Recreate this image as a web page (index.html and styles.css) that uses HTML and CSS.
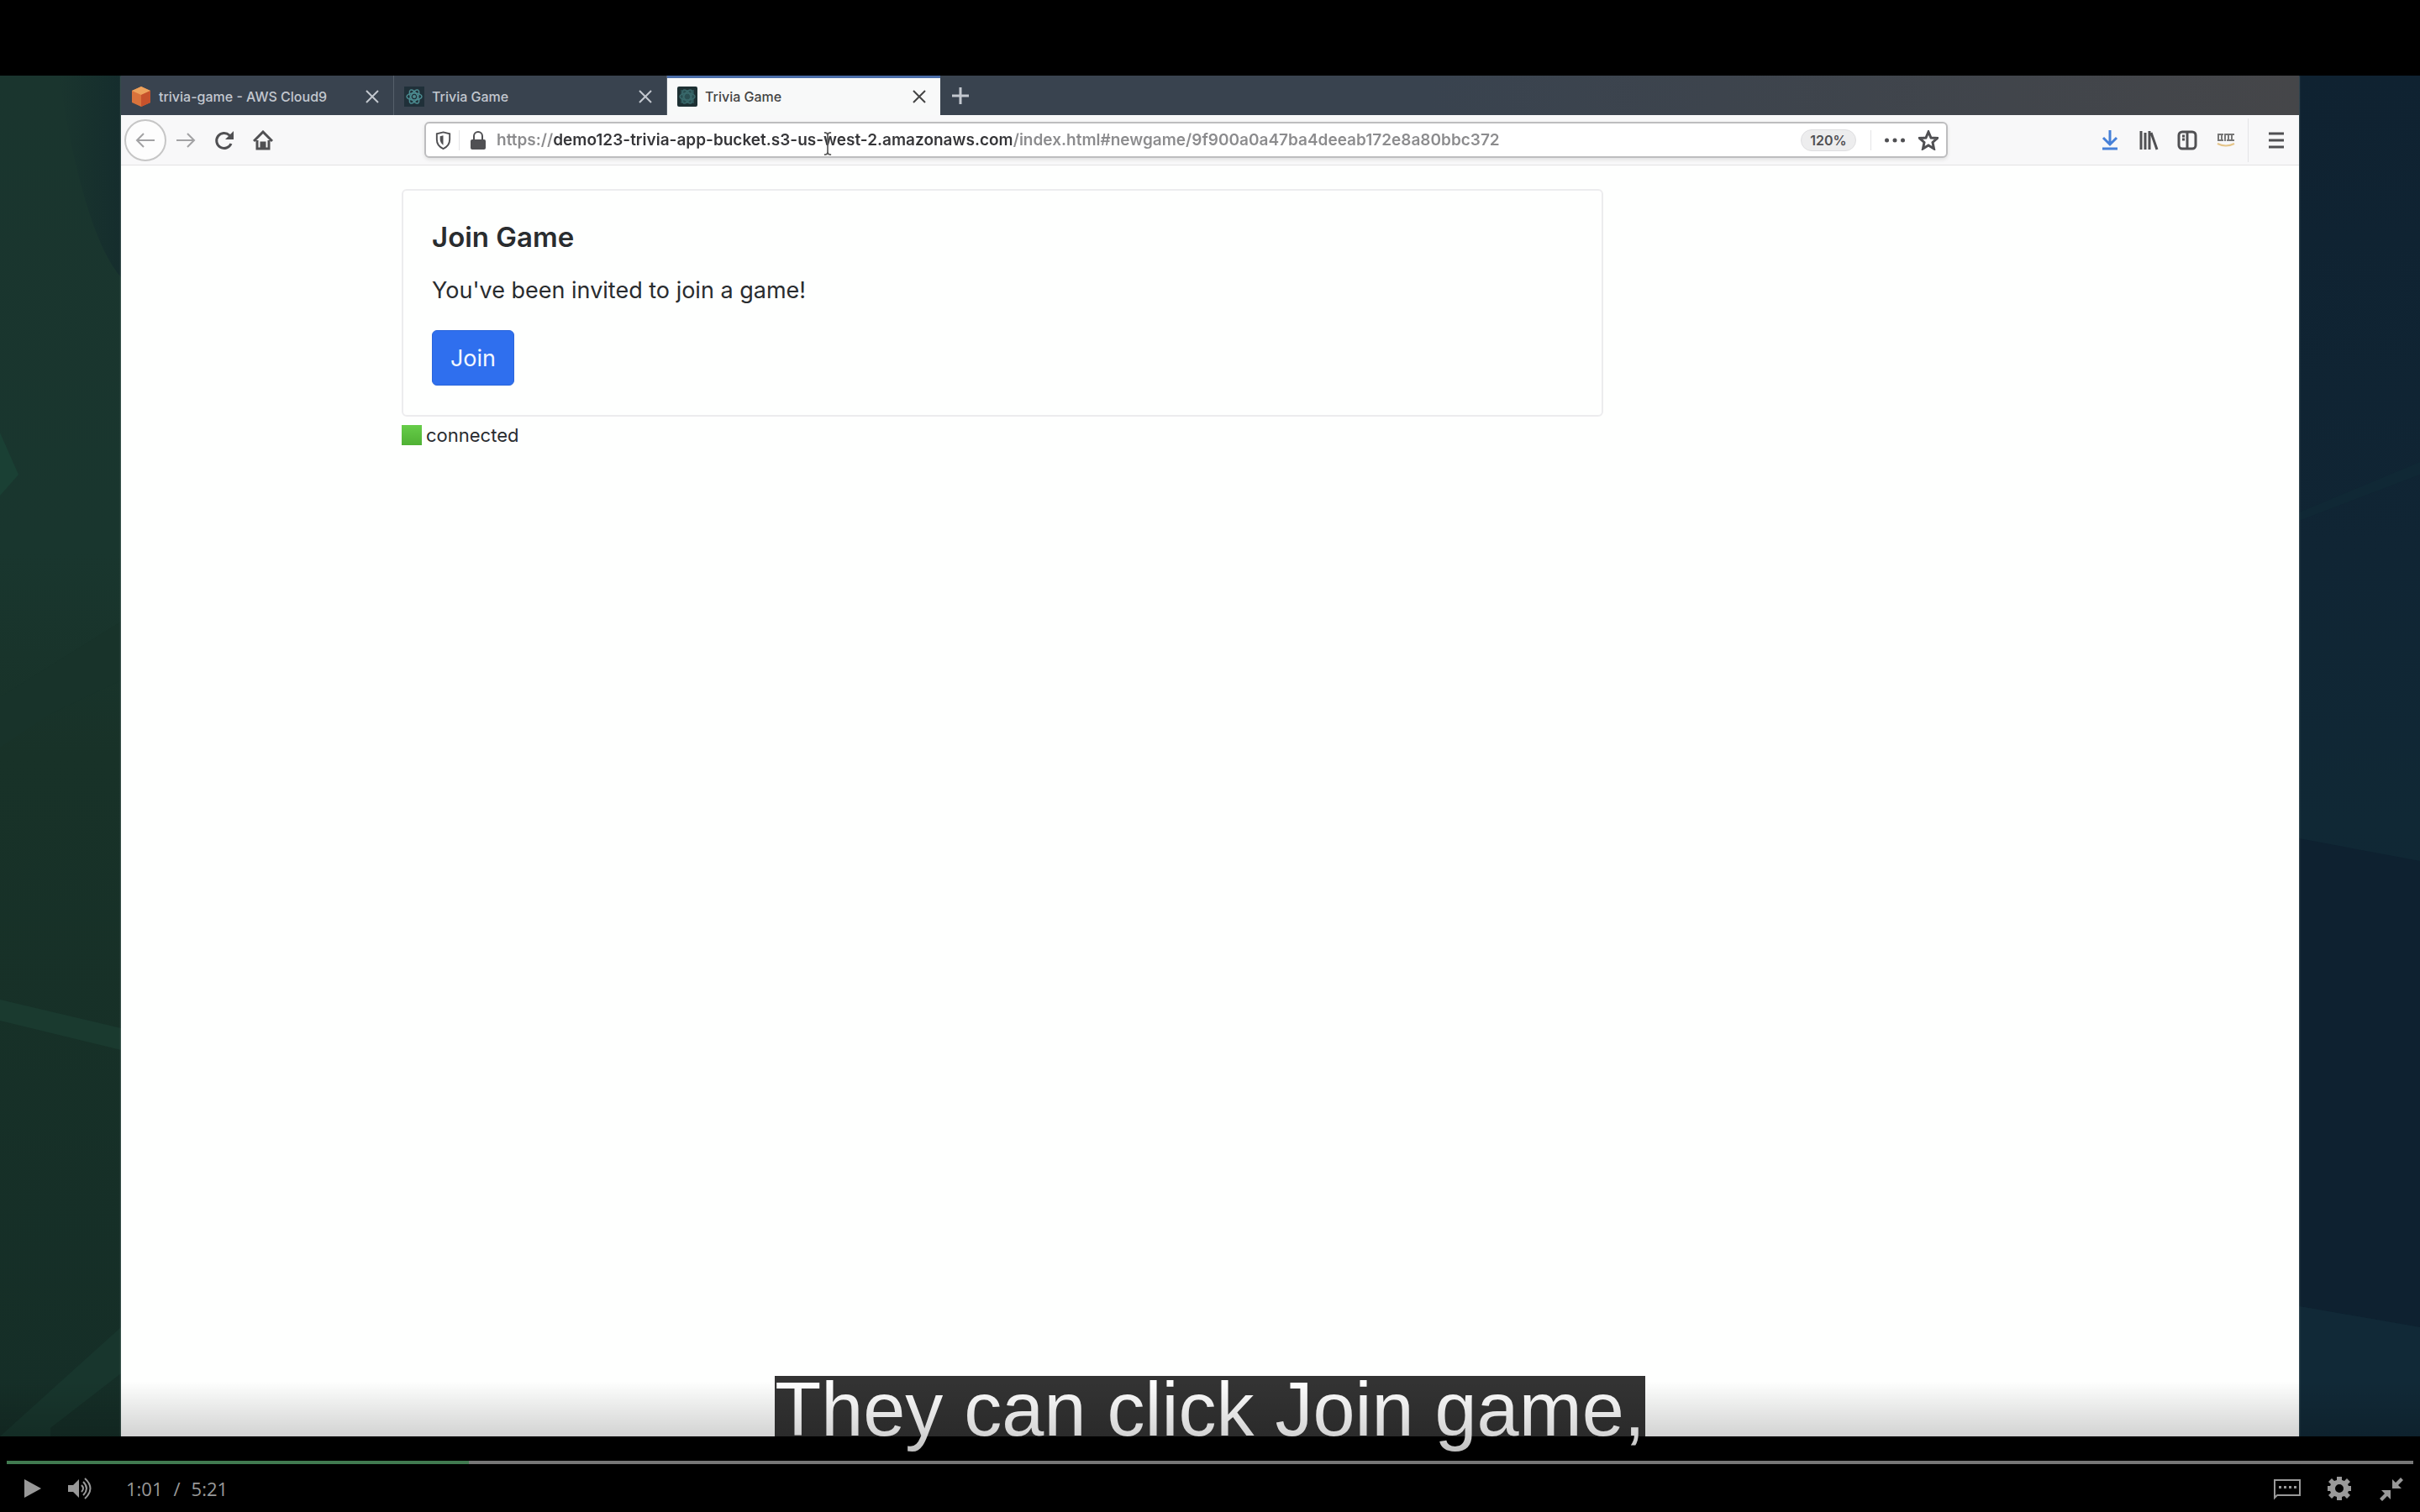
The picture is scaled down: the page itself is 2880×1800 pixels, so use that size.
FILE: index.html
```html
<!DOCTYPE html>
<html lang="en">
<head>
<meta charset="utf-8">
<title>Trivia Game video</title>
<link rel="stylesheet" href="styles.css">
</head>
<body>
<main class="player">
  <section class="video">
    <svg class="backdrop" viewBox="0 0 2880 1620" preserveAspectRatio="none" aria-hidden="true">
      <defs>
        <linearGradient id="green" x1="0" y1="0" x2="0" y2="1">
          <stop offset="0" stop-color="#1a352e"/><stop offset=".35" stop-color="#19362e"/>
          <stop offset=".5" stop-color="#183228"/><stop offset="1" stop-color="#152e27"/>
        </linearGradient>
        <linearGradient id="navy" x1="0" y1="0" x2="0" y2="1">
          <stop offset="0" stop-color="#0f2231"/><stop offset=".35" stop-color="#102534"/>
          <stop offset=".55" stop-color="#102835"/><stop offset="1" stop-color="#102533"/>
        </linearGradient>
        <linearGradient id="patch" x1="0" y1="0" x2="1" y2="0">
          <stop offset="0" stop-color="#152d2d" stop-opacity="0"/><stop offset="1" stop-color="#152d2d"/>
        </linearGradient>
      </defs>
      <rect width="1440" height="1620" fill="url(#green)"/>
      <rect x="1440" width="1440" height="1620" fill="url(#navy)"/>
      <path d="M70 0H144V240Q100 190 70 0Z" fill="url(#patch)"/>
      <path d="M0 425 22 475 0 500Z" fill="#1a4034"/>
      <path d="M0 740 144 650V720L60 760 0 800Z" fill="#18332a"/>
      <path d="M0 1100 144 1134V1160L0 1125Z" fill="#1a3a2f"/>
      <path d="M144 1490V1545L60 1610V1620H0Z" fill="#18362d"/>
      <path d="M2736 520 2880 460V475L2736 530Z" fill="#102835"/>
      <path d="M2736 908 2880 935V1490L2736 1465Z" fill="#0e2130"/>
      <path d="M2736 1465 2880 1490V1620H2736Z" fill="#112937"/>
    </svg>

    <div class="browser">
      <nav class="tabs" aria-label="Browser tabs">
        <div class="tab">
          <svg class="favicon" viewBox="0 0 24 24" aria-hidden="true"><path d="M12 0 23 5V19L12 24 1 19V5Z" fill="#d9733c"/><path d="M12 0 23 5 12 10 1 5Z" fill="#eda25c"/><path d="M12 10 23 5V19L12 24Z" fill="#c7522c"/></svg>
          <span class="tab-title">trivia-game - AWS Cloud9</span>
          <button class="close" aria-label="Close tab"><svg viewBox="0 0 16 16"><path d="M1 1 15 15M15 1 1 15"/></svg></button>
        </div>
        <div class="tab">
          <svg class="favicon" viewBox="0 0 24 24" aria-hidden="true"><rect width="24" height="24" fill="#203039"/><g fill="none" stroke="#4c8c91" stroke-width="1.5"><ellipse cx="12" cy="12" rx="9" ry="4"/><ellipse cx="12" cy="12" rx="9" ry="4" transform="rotate(60 12 12)"/><ellipse cx="12" cy="12" rx="9" ry="4" transform="rotate(120 12 12)"/></g><circle cx="12" cy="12" r="2" fill="#4c8c91"/></svg>
          <span class="tab-title">Trivia Game</span>
          <button class="close" aria-label="Close tab"><svg viewBox="0 0 16 16"><path d="M1 1 15 15M15 1 1 15"/></svg></button>
        </div>
        <div class="tab tab-active">
          <svg class="favicon" viewBox="0 0 24 24" aria-hidden="true"><rect width="24" height="24" rx="2" fill="#1d3033"/><rect x="4" y="4" width="16" height="16" fill="#2a4e51"/><g fill="none" stroke="#39696b" stroke-width="1.5"><ellipse cx="12" cy="12" rx="9" ry="4"/><ellipse cx="12" cy="12" rx="9" ry="4" transform="rotate(60 12 12)"/><ellipse cx="12" cy="12" rx="9" ry="4" transform="rotate(120 12 12)"/></g></svg>
          <span class="tab-title">Trivia Game</span>
          <button class="close" aria-label="Close tab"><svg viewBox="0 0 16 16"><path d="M1 1 15 15M15 1 1 15"/></svg></button>
        </div>
        <button class="new-tab" aria-label="New tab"><svg viewBox="0 0 20 20"><path d="M10 0V20M0 10H20"/></svg></button>
      </nav>

      <div class="toolbar">
        <div class="nav-buttons">
          <button class="tool back" aria-label="Back"><svg class="icon faded" viewBox="0 0 24 24"><path d="M23 12H2M10 4 2 12 10 20"/></svg></button>
          <button class="tool" aria-label="Forward"><svg class="icon faded" viewBox="0 0 24 24"><path d="M1 12H22M14 4 22 12 14 20"/></svg></button>
          <button class="tool" aria-label="Reload"><svg class="icon bold" viewBox="0 0 24 24"><path d="M20 16A9 9 0 1 1 18 6L21 9"/><path d="M23 1V11H13Z" fill="currentColor" stroke="none"/></svg></button>
          <button class="tool" aria-label="Home"><svg class="icon bold" viewBox="0 0 24 24"><path d="M1 13 12 2 23 13M5 12V22H19V12"/><path d="M10 22V15H14V22" fill="currentColor"/></svg></button>
        </div>
        <div class="address">
          <svg class="icon shield" viewBox="0 0 24 24" aria-hidden="true"><path d="M12 2 20 4V11Q20 19 12 22.500Q4 19 4 11V4Z"/><path d="M12 6V18Q8 15 8 11V7Z" fill="currentColor" stroke="none"/></svg>
          <svg class="icon lock" viewBox="0 0 24 24" aria-hidden="true"><rect x="3" y="11" width="18" height="12" rx="2" fill="currentColor" stroke="none"/><path d="M7 12V7A5 5 0 0 1 17 7V12"/></svg>
          <input class="url" type="text" aria-label="Address" value="https://demo123-trivia-app-bucket.s3-us-west-2.amazonaws.com/index.html#newgame/9f900a0a47ba4deeab172e8a80bbc372">
          <button class="zoom">120%</button>
          <div class="page-actions">
            <button class="tool" aria-label="Page actions"><svg class="icon" viewBox="0 0 24 24"><g fill="currentColor" stroke="none"><circle cx="2.500" cy="12" r="2.500"/><circle cx="12" cy="12" r="2.500"/><circle cx="21.500" cy="12" r="2.500"/></g></svg></button>
            <button class="tool" aria-label="Bookmark"><svg class="icon bold" viewBox="0 0 24 24"><path d="M12 2 15 9 22.500 9.500 17 14.500 18.500 22 12 18 5.500 22 7 14.500 1.500 9.500 9 9Z"/></svg></button>
          </div>
          <svg class="pointer" viewBox="0 0 12 34" aria-hidden="true"><path d="M1 1Q6 1 6 5V29Q6 33 1 33M11 1Q6 1 6 5M6 29Q6 33 11 33"/></svg>
        </div>
        <div class="extras">
          <button class="tool download" aria-label="Downloads"><svg class="icon bold" viewBox="0 0 24 24"><path d="M12 0V16M4 9 12 17 20 9M3 22H21"/></svg></button>
          <button class="tool" aria-label="Library"><svg class="icon bold" viewBox="0 0 24 24"><path d="M3 1V23M8 3V23M13 1V23M15 3 22 23"/></svg></button>
          <button class="tool" aria-label="Sidebar"><svg class="icon bold" viewBox="0 0 24 24"><rect x="2" y="2" width="20" height="20" rx="4"/><path d="M12 2V22M6 7H9M6 11H9"/></svg></button>
          <button class="tool" aria-label="Extension"><svg class="icon" viewBox="0 0 24 24"><path d="M3 4V13M7 4V13M11 4V13M15 4V13M19 4V13M2 5H9M11 5H22M3 12H9M13 12H22" stroke="#777"/><path d="M2 16Q12 21 22 16" stroke="#e5c58a"/></svg></button>
          <button class="tool menu" aria-label="Menu"><svg class="icon bold" viewBox="0 0 24 24"><path d="M3 4H21M3 12H21M3 20H21"/></svg></button>
        </div>
      </div>

      <div class="page">
        <article class="card">
          <h1 class="card-title">Join Game</h1>
          <p class="card-text">You've been invited to join a game!</p>
          <button class="join">Join</button>
        </article>
        <p class="status"><span class="status-light"></span>connected</p>
      </div>
    </div>
  </section>

  <p class="caption"><span class="caption-text">They can click Join game,</span></p>

  <div class="shade"></div>
  <footer class="controls">
    <input class="seek" type="range" min="0" max="321" value="61" aria-label="Seek">
    <div class="control-row">
      <button class="control" aria-label="Play"><svg viewBox="0 0 32 32"><path d="M6 5V27L26 16Z"/></svg></button>
      <button class="control volume" aria-label="Volume"><svg viewBox="0 0 32 32"><path d="M2 12H8L15 5V27L8 20H2Z"/><path d="M18 12Q22 16 18 20M20 8Q28 16 20 24M22 4Q35 16 22 28" fill="none" stroke="currentColor" stroke-width="2"/></svg></button>
      <div class="time"><span>1:01</span><span>/</span><span>5:21</span></div>
      <div class="control-group">
        <button class="control" aria-label="Captions"><svg viewBox="0 0 32 32"><path d="M1 6H31V24H4L1 27Z" fill="none" stroke="currentColor" stroke-width="2"/><path d="M6 13h3v3h-3zM12 13h3v3h-3zM18 13h3v3h-3zM24 13h3v3h-3z"/></svg></button>
        <button class="control" aria-label="Settings"><svg viewBox="0 0 32 32"><path fill-rule="evenodd" d="M13 2H19V6L22 7 25 4 29 8 26 11 27 13H30V19H27L26 21 29 24 25 28 22 25 19 26V30H13V26L10 25 7 28 3 24 6 21 5 19H2V13H5L6 11 3 8 7 4 10 7 13 6ZM16 11A5 5 0 1 0 16 21A5 5 0 1 0 16 11Z"/></svg></button>
        <button class="control" aria-label="Exit full screen"><svg viewBox="0 0 32 32"><path d="M17 5V16H28L24 12 30 6 27 3 21 9ZM15 29V18H4L8 22 2 28 5 31 11 25Z"/></svg></button>
      </div>
    </div>
  </footer>
</main>
</body>
</html>
```
FILE: styles.css
```css
* {
  box-sizing: border-box;
}

body {
  margin: 0;
  background: #000;
  font-family: Inter, "Liberation Sans", sans-serif;
}

button {
  padding: 0;
  border: 0;
  background: none;
  color: inherit;
  font: inherit;
}

svg {
  display: block;
}

.player {
  position: relative;
  display: flex;
  align-items: center;
  min-height: 100vh;
  overflow: hidden;
}

.video {
  position: relative;
  display: flex;
  width: 100%;
  aspect-ratio: 16 / 9;
  padding: 0 5%;
}

.backdrop {
  position: absolute;
  inset: 0;
  width: 100%;
  height: 100%;
}

.browser {
  position: relative;
  flex: 1;
  min-width: 0;
  background: #fefffe;
  box-shadow: 0 0 2px #7b8f8c;
  clip-path: inset(0 -2px);
}

/* Tab strip */
.tabs {
  display: flex;
  height: 47px;
  background: linear-gradient(90deg, #39434f 60%, #454649);
  color: #c3c8cf;
}

.tab {
  display: flex;
  align-items: center;
  gap: 9px;
  width: 325px;
  padding: 2px 17px 0 12px;
  border-right: 1px solid #56606b;
  font-size: 16px;
  font-weight: 500;
}

.tab-active {
  padding-top: 0;
  border-top: 3px solid #4a6da9;
  border-right: 0;
  background: #f8f9f9;
  color: #444;
}

.favicon {
  width: 24px;
  height: 24px;
}

.tab-title {
  flex: 1;
  white-space: nowrap;
}

.close svg {
  width: 16px;
  height: 16px;
}

.close path,
.new-tab path {
  fill: none;
  stroke: currentColor;
  stroke-width: 2;
}

.new-tab {
  padding: 0 14px;
}

.new-tab svg {
  width: 20px;
  height: 20px;
}

.new-tab path {
  stroke-width: 3;
}

/* Toolbar */
.toolbar {
  display: flex;
  align-items: center;
  height: 60px;
  border-bottom: 1px solid #e3e3e3;
  background: #f8f8f9;
  color: #505053;
}

.nav-buttons {
  display: flex;
  align-items: center;
  gap: 22px;
  width: 361px;
  padding-left: 4px;
}

.icon {
  width: 24px;
  height: 24px;
  fill: none;
  stroke: currentColor;
  stroke-width: 2;
}

.bold {
  stroke-width: 3;
}

.faded {
  color: #a2a2a4;
}

.back {
  display: grid;
  place-items: center;
  width: 50px;
  height: 50px;
  margin-right: -11px;
  border: 2px solid #c6c6c6;
  border-radius: 50%;
  background: #fdfdfd;
}

.address {
  position: relative;
  display: flex;
  align-items: center;
  flex: 1;
  min-width: 0;
  height: 43px;
  border: 2px solid #bdbdbf;
  border-radius: 6px;
  background: #fff;
  box-shadow: 0 2px 4px #e0e0e0;
}

.shield {
  width: 40px;
  padding-right: 7px;
  padding-left: 9px;
  border-right: 1px solid #e4e4e6;
}

.lock {
  margin: 0 10px;
}

.url {
  flex: 1;
  min-width: 0;
  padding: 0;
  border: 0;
  background: linear-gradient(90deg, #8b8b8d 67px, #353538 67px 613px, #8b8b8d 613px);
  background-clip: text;
  color: transparent;
  font: 600 19px/36px Inter, "Liberation Sans", sans-serif;
}

.zoom {
  width: 66px;
  height: 26px;
  margin-right: 17px;
  border: 1px solid #dedee0;
  border-radius: 13px;
  background: #ededee;
  font-size: 16px;
  font-weight: 600;
}

.page-actions {
  display: flex;
  gap: 16px;
  padding: 0 9px 0 16px;
  border-left: 1px solid #e4e4e6;
}

.pointer {
  position: absolute;
  top: 10px;
  left: 473px;
  width: 10px;
  height: 28px;
  fill: none;
  stroke: #555;
  stroke-width: 2;
}

.extras {
  display: flex;
  align-items: center;
  justify-content: flex-end;
  gap: 22px;
  width: 418px;
  padding-right: 15px;
}

.download {
  color: #4680d8;
}

.menu {
  padding: 14px 0 14px 21px;
  margin-left: -8px;
  border-left: 1px solid #e4e4e6;
}

/* Page content */
.page {
  width: 1430px;
  max-width: 100%;
  margin-left: 334px;
  padding-top: 28px;
  color: #292c2f;
}

.card {
  padding: 35px 34px;
  border: 2px solid #ececee;
  border-radius: 6px;
}

.card-title {
  margin: 0;
  font-size: 33px;
  font-weight: 600;
  line-height: 40px;
}

.card-text {
  margin: 22px 0 25px;
  font-size: 27px;
  line-height: 44px;
}

.join {
  display: block;
  width: 98px;
  height: 66px;
  border: 1px solid #2a65da;
  border-radius: 6px;
  background: #2f6fee;
  color: #f3f7ff;
  font-size: 27px;
}

.status {
  display: flex;
  align-items: center;
  gap: 5px;
  margin: 6px 0 0;
  font-size: 22px;
  line-height: 32px;
}

.status-light {
  width: 24px;
  height: 24px;
  background: linear-gradient(#66cd49, #50b134);
}

/* Player overlays */
.caption {
  position: absolute;
  bottom: 60px;
  left: 0;
  width: 100%;
  margin: 0;
  text-align: center;
}

.caption-text {
  display: inline-block;
  padding-bottom: 22px;
  background: linear-gradient(rgba(0, 0, 0, 0.8) 72px, #000 72px);
  color: #fff;
  font: 90px/80px "Liberation Sans", Arial, sans-serif;
}

.shade {
  position: absolute;
  right: 0;
  bottom: 0;
  left: 0;
  height: 156px;
  background: linear-gradient(transparent, rgba(0, 0, 0, 0.17) 64px, rgba(0, 0, 0, 0.25) 84px, rgba(0, 0, 0, 0.5));
}

.controls {
  position: absolute;
  right: 0;
  bottom: 0;
  left: 0;
  padding: 0 8px;
  color: #999;
}

.seek {
  display: block;
  width: 100%;
  height: 4px;
  margin: 0;
  appearance: none;
  background: linear-gradient(90deg, #417a50 550px, #777 550px);
}

.seek::-webkit-slider-thumb {
  width: 0;
  height: 0;
  appearance: none;
}

.control-row {
  display: flex;
  align-items: center;
  gap: 32px;
  height: 57px;
  padding: 0 10px 0 15px;
}

.control svg {
  width: 32px;
  height: 32px;
  fill: currentColor;
}

.control-group {
  display: flex;
  gap: 30px;
}

.volume {
  margin-left: -8px;
}

.time {
  display: flex;
  flex: 1;
  gap: 13px;
  margin-left: 7px;
  font: 22px/32px "Open Sans", sans-serif;
}
```
